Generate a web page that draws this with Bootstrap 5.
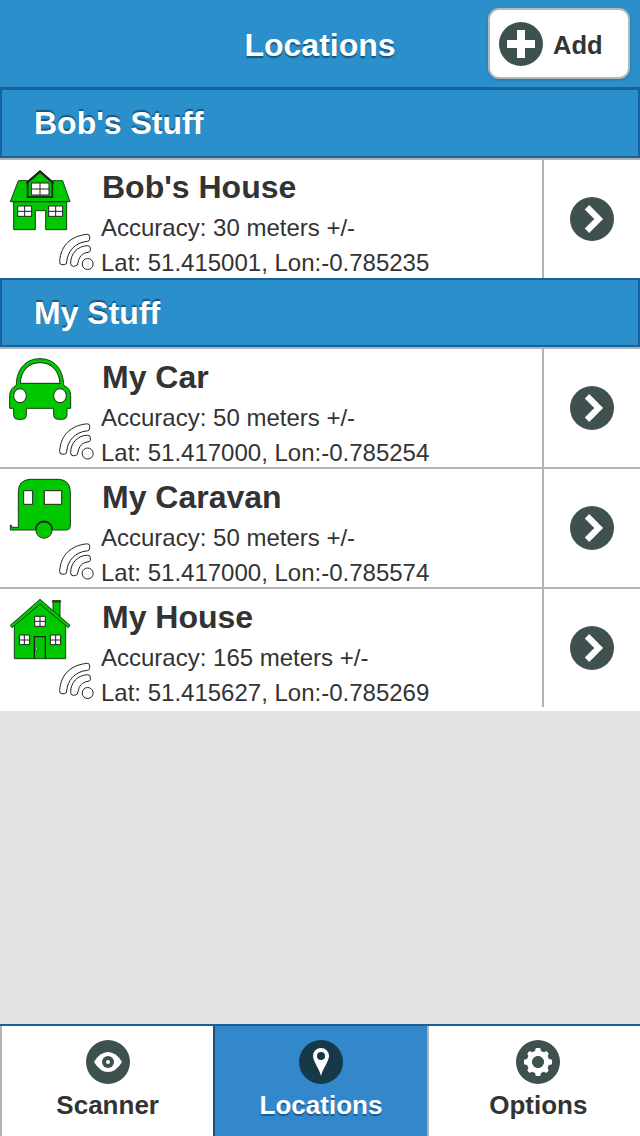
<!DOCTYPE html>
<html lang="en">
<head>
<meta charset="utf-8">
<meta name="viewport" content="width=device-width, initial-scale=1">
<title>Locations</title>
<link href="https://cdn.jsdelivr.net/npm/bootstrap@5.3.0/dist/css/bootstrap.min.css" rel="stylesheet">
<style>
  body { font-family: "Liberation Sans", Arial, sans-serif; background: #e3e3e3; color: #333; }
  .topbar { height: 88px; background: #2a8fcb; border-bottom: 1px solid #17659e; grid-template-columns: 1fr auto 1fr; }
  .topbar h1 { font-size: 32px; line-height: 40px; text-shadow: 0 2px 1px #1d567c; margin-top: 3px; }
  .add-btn { width: 142px; height: 71px; margin: 8px 10px 0 0; padding: 0 9px; border: 2px solid #b3b8bc; border-radius: 11px; background: #fff; color: #333; font-size: 25.500px; box-shadow: 0 1px 3px rgba(0,0,0,.2); }
  .add-btn:hover { background: #fff; color: #333; }
  .add-btn span { margin-left: 10px; padding-top: 4px; }
  .group-title { height: 70px; background: #2a8fcb; border: 2px solid #17629a; padding-left: 32px; font-size: 32px; line-height: 66px; text-shadow: 0 -2px 1px #1d567c; margin: 0; }
  .group-title.later { height: 69px; }
  .place { height: 120px; background: #fff; border-top: 2px solid #b3b3b3; }
  .place.final { height: 124px; }
  .place h3 { font-size: 32px; line-height: 40px; margin: 0 0 3px 1px; }
  .place p { font-size: 24px; line-height: 35px; margin: 0; white-space: nowrap; }
  .place-text { padding-top: 8px; }
  .place.first .place-text { padding-top: 7px; }
  .pic { width: 101px; height: 118px; }
  .go { width: 98px; height: 118px; border-left: 2px solid #b3b3b3; }
  .disc { fill: #3f514f; }
  .grn { fill: #00c800; stroke: #173d17; stroke-width: 3; }
  .wht { fill: #fff; stroke: #222; stroke-width: 3; }
  .ln { fill: none; stroke: #222; stroke-width: 3; }
  .tabs { height: 112px; border-top: 2px solid #1b5f94; background: #fff; }
  .tabs a { font-size: 26px; line-height: 30px; color: #333; border-left: 2px solid #b3b3b3; padding-top: 14px; }
  .tabs a span { margin-top: 6px; }
  .tabs a:last-child { padding-left: 8px; }
  .tabs .on { background: #3388cc; color: #fff; border-left-color: #1d5178; text-shadow: 0 2px 1px #1b5c8c; }
  .tabs .on .disc { fill: #163947; }
</style>
</head>
<body>
<svg class="d-none">
  <symbol id="signal" viewBox="0 0 303 354">
    <path class="wht" d="M179 304C182 255 215 227 262 223Q269 223 269 230V238Q269 243 262 244C225 247 202 275 200 306Q200 314 193 314H186Q178 314 179 304Z"/>
    <path class="wht" d="M212 310C212 280 232 259 262 257Q271 257 271 264V272Q271 276 264 277C247 279 237 290 234 308Q233 318 226 318L220 319Q212 319 212 310Z"/>
    <circle class="wht" cx="263" cy="312" r="16.5"/>
  </symbol>
  <symbol id="chevron" viewBox="0 0 44 44">
    <circle class="disc" cx="22" cy="22" r="22"/>
    <path d="M17 10.200L28.700 22L17 33.800" fill="none" stroke="#fff" stroke-width="6.200"/>
  </symbol>
</svg>
<div class="d-flex flex-column min-vh-100">
  <header class="topbar d-grid align-items-start">
    <div></div>
    <h1 class="fw-bold text-white align-self-center mb-0">Locations</h1>
    <button type="button" class="add-btn btn fw-bold d-flex align-items-center ms-auto">
      <svg width="44" height="44" viewBox="0 0 44 44"><circle class="disc" cx="22" cy="22" r="22"/><path d="M22 8V36M8 22H36" stroke="#fff" stroke-width="8"/></svg>
      <span>Add</span>
    </button>
  </header>
  <main class="flex-grow-1">
    <h2 class="group-title fw-bold text-white">Bob's Stuff</h2>
    <div class="place first d-flex">
      <svg class="pic flex-shrink-0" viewBox="0 0 303 354">
        <path class="grn" d="M41 125V209H106V152H137V209H200V125ZM55 62H188L210 125H31Z"/>
        <path class="grn" d="M83 67L120 35L157 67V111H83Z" style="stroke-width:6"/>
        <path class="ln" d="M79 70L120 34L161 70" style="stroke-width:6"/>
        <path class="wht" d="M94 69H147V105H94ZM120 69V105M94 87H147M53 138H95V169H53ZM74 138V169M53 154H95M146 138H188V169H146ZM167 138V169M146 154H188"/>
        <use href="#signal" width="303" height="354"/>
      </svg>
      <div class="place-text flex-grow-1">
        <h3 class="fw-bold">Bob's House</h3>
        <p>Accuracy: 30 meters +/-</p>
        <p>Lat: 51.415001, Lon:-0.785235</p>
      </div>
      <a href="#" class="go d-flex align-items-center justify-content-center"><svg width="44" height="44"><use href="#chevron"/></svg></a>
    </div>
    <h2 class="group-title later fw-bold text-white">My Stuff</h2>
    <div class="place d-flex">
      <svg class="pic flex-shrink-0" viewBox="0 0 303 354">
        <g transform="translate(0 -12)">
          <path class="grn" d="M49 121C49 74 76 41 120 41C164 41 190 74 191 121Q212 130 212 151V190H201V212Q199 223 187 223H175Q162 223 161 212V190H79V212Q78 223 66 223H54Q42 223 41 212V190H29V151Q30 130 49 121Z"/>
          <path class="wht" d="M61 115C62 78 86 53 120 53C154 53 178 78 180 115Z"/>
          <ellipse class="wht" cx="60" cy="152" rx="19" ry="21"/>
          <ellipse class="wht" cx="180" cy="152" rx="19" ry="21"/>
        </g>
        <use href="#signal" y="1.500" width="303" height="354"/>
      </svg>
      <div class="place-text flex-grow-1">
        <h3 class="fw-bold">My Car</h3>
        <p>Accuracy: 50 meters +/-</p>
        <p>Lat: 51.417000, Lon:-0.785254</p>
      </div>
      <a href="#" class="go d-flex align-items-center justify-content-center"><svg width="44" height="44"><use href="#chevron"/></svg></a>
    </div>
    <div class="place d-flex">
      <svg class="pic flex-shrink-0" viewBox="0 0 303 354">
        <g transform="translate(0 -12)">
          <path class="grn" d="M55 187V77Q57 46 88 43H178Q208 46 211 77V184Q210 195 199 195H31V180Q35 178 36 187Z"/>
          <path class="wht" d="M71 77H98V118H71ZM133 77H185V118H133Z"/>
          <circle class="grn" cx="132" cy="195" r="24.500"/>
          <path class="ln" d="M107 194A25 25 0 0 1 157 194" style="stroke-width:5"/>
        </g>
        <use href="#signal" y="1.500" width="303" height="354"/>
      </svg>
      <div class="place-text flex-grow-1">
        <h3 class="fw-bold">My Caravan</h3>
        <p>Accuracy: 50 meters +/-</p>
        <p>Lat: 51.417000, Lon:-0.785574</p>
      </div>
      <a href="#" class="go d-flex align-items-center justify-content-center"><svg width="44" height="44"><use href="#chevron"/></svg></a>
    </div>
    <div class="place final d-flex">
      <svg class="pic flex-shrink-0" viewBox="0 0 303 354">
        <g transform="translate(0 -3)">
          <path class="grn" d="M159 39H180V90L159 73ZM157 38H182V42H157Z"/>
          <path class="grn" d="M43 105L120 45L197 105V212H43Z"/>
          <path class="grn" d="M31 112L120 34L210 112L205 119L120 48L36 119Z"/>
          <path class="wht" d="M104 85H136V115H104ZM120 85V115M104 100H136M58 141H89V170H58ZM73 141V170M58 156H89M151 141H182V170H151ZM167 141V170M151 156H182"/>
          <path class="ln" d="M103 212V146H136V212" style="stroke-width:4"/>
          <circle class="wht" cx="110" cy="183" r="3.500" style="stroke-width:2"/>
        </g>
        <use href="#signal" width="303" height="354"/>
      </svg>
      <div class="place-text flex-grow-1">
        <h3 class="fw-bold">My House</h3>
        <p>Accuracy: 165 meters +/-</p>
        <p>Lat: 51.415627, Lon:-0.785269</p>
      </div>
      <a href="#" class="go d-flex align-items-center justify-content-center"><svg width="44" height="44"><use href="#chevron"/></svg></a>
    </div>
  </main>
  <nav class="tabs d-flex fw-bold">
    <a href="#" class="col-4 d-flex flex-column align-items-center text-decoration-none">
      <svg width="44" height="44" viewBox="0 0 44 44"><circle class="disc" cx="22" cy="22" r="22"/><path d="M8 22Q14 12 22 12T36 22Q30 32 22 32T8 22Z" fill="#fff"/><circle class="disc" cx="22" cy="22" r="6"/><circle cx="22" cy="22" r="2" fill="#fff"/></svg>
      <span>Scanner</span>
    </a>
    <a href="#" class="on col-4 d-flex flex-column align-items-center text-decoration-none">
      <svg width="44" height="44" viewBox="0 0 44 44"><circle class="disc" cx="22" cy="22" r="22"/><path d="M22 36C20 28 14 21 14 16A8 8 0 0 1 30 16C30 21 24 28 22 36Z" fill="#fff"/><circle class="disc" cx="22" cy="16" r="4"/></svg>
      <span>Locations</span>
    </a>
    <a href="#" class="col-4 d-flex flex-column align-items-center text-decoration-none">
      <svg width="44" height="44" viewBox="0 0 44 44"><circle class="disc" cx="22" cy="22" r="22"/><circle cx="22" cy="22" r="8.600" fill="none" stroke="#fff" stroke-width="5.200"/><path d="M19.800 8H24.200L25.500 13H18.500ZM19.800 36H24.200L25.500 31H18.500ZM8 19.800V24.200L13 25.500V18.500ZM36 19.800V24.200L31 25.500V18.500Z" fill="#fff"/><path d="M14 14L30 30M14 30L30 14" stroke="#fff" stroke-width="5" stroke-linecap="round"/><circle class="disc" cx="22" cy="22" r="6"/></svg>
      <span>Options</span>
    </a>
  </nav>
</div>
<script src="https://cdn.jsdelivr.net/npm/bootstrap@5.3.0/dist/js/bootstrap.bundle.min.js"></script>
</body>
</html>
